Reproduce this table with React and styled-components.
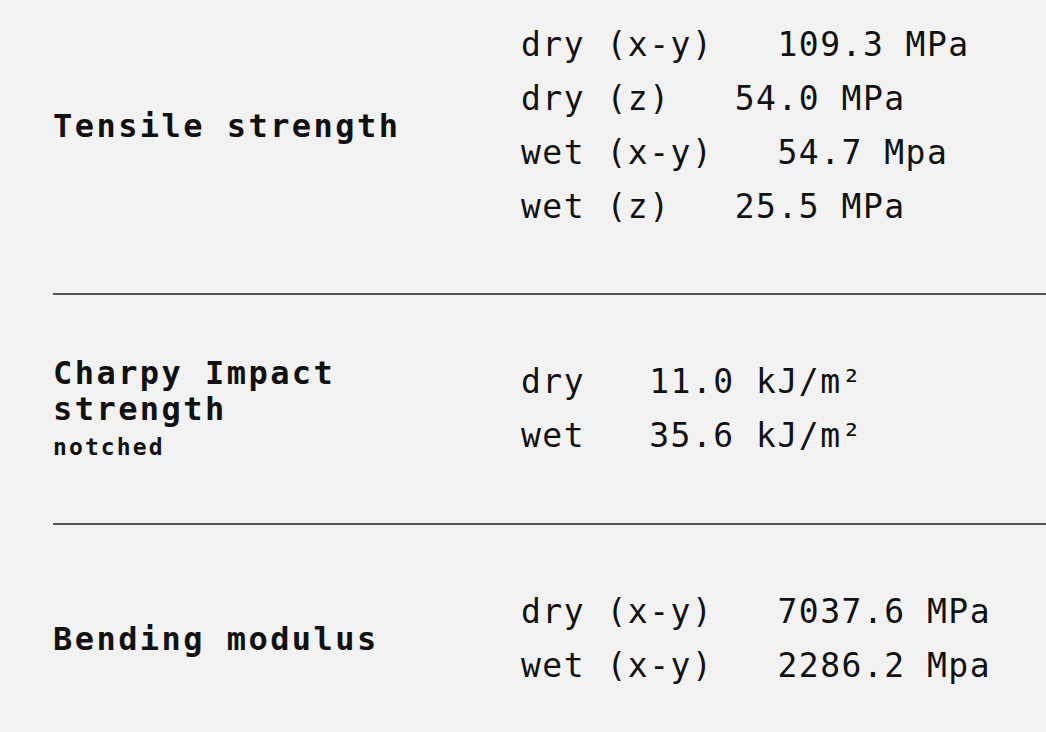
import React from "react";
import styled, { createGlobalStyle } from "styled-components";

const specs = [
  {
    title: ["Tensile strength"],
    values: [
      "dry (x-y)   109.3 MPa",
      "dry (z)   54.0 MPa",
      "wet (x-y)   54.7 Mpa",
      "wet (z)   25.5 MPa",
    ],
  },
  {
    title: ["Charpy Impact", "strength"],
    note: "notched",
    values: ["dry   11.0 kJ/m²", "wet   35.6 kJ/m²"],
  },
  {
    title: ["Bending modulus"],
    values: ["dry (x-y)   7037.6 MPa", "wet (x-y)   2286.2 Mpa"],
  },
];

const GlobalStyle = createGlobalStyle`
  html, body {
    margin: 0;
    background: #f2f2f2;
  }
  body {
    font-family: "DejaVu Sans Mono", "Liberation Mono", monospace;
    color: #111;
  }
`;

const Sheet = styled.div`
  padding-left: 53px;
`;

const Section = styled.section`
  display: grid;
  grid-template-columns: 468px 1fr;
  align-items: center;
  padding: ${(p) => (p.$first ? "18px 0 59px" : "60px 0")};
  border-top: ${(p) => (p.$first ? "none" : "2px solid #555")};
`;

const Title = styled.div`
  font-weight: 700;
  font-size: 32px;
  letter-spacing: 2.45px;
  line-height: 36px;
`;

const Note = styled.div`
  margin-top: 4px;
  font-weight: 700;
  font-size: 23px;
  letter-spacing: 2.1px;
  line-height: 32px;
`;

const Values = styled.div`
  display: flex;
  flex-direction: column;
`;

const Value = styled.div`
  font-size: 33px;
  letter-spacing: 1.5px;
  line-height: 54px;
  white-space: pre;
`;

export default function App() {
  return (
    <>
      <GlobalStyle />
      <Sheet>
        {specs.map((s, i) => (
          <Section key={i} $first={i === 0}>
            <div>
              {s.title.map((t) => (
                <Title key={t}>{t}</Title>
              ))}
              {s.note && <Note>{s.note}</Note>}
            </div>
            <Values>
              {s.values.map((v) => (
                <Value key={v}>{v}</Value>
              ))}
            </Values>
          </Section>
        ))}
      </Sheet>
    </>
  );
}
